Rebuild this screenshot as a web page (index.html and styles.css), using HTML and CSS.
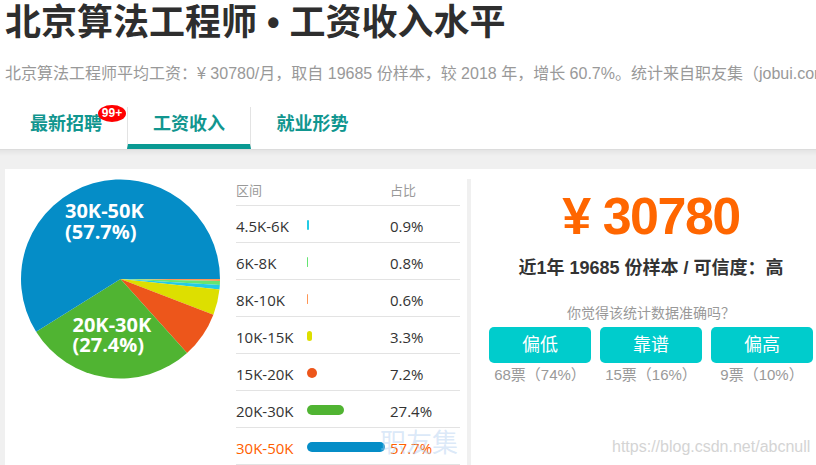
FILE: index.html
```html
<!DOCTYPE html>
<html lang="zh-CN">
<head>
<meta charset="utf-8">
<title>北京算法工程师 • 工资收入水平</title>
<link rel="stylesheet" href="styles.css">
</head>
<body>
<div class="page">
  <header class="head">
    <h1 class="title">北京算法工程师 • 工资收入水平</h1>
    <p class="sub">北京算法工程师平均工资：¥ 30780/月，取自 19685 份样本，较 2018 年，增长 60.7%。统计来自职友集（jobui.com）</p>
    <nav class="tabs">
      <a class="tab t1">最新招聘<span class="badge">99+</span></a>
      <a class="tab t2 active">工资收入</a>
      <a class="tab t3">就业形势</a>
    </nav>
  </header>
  <main class="main">
    <div class="card">
      <section class="left">
        <svg class="pie" width="200" height="200" viewBox="0 0 200 200">
          <path class="s-salmon" d="M100.5 100 L200 100 A99.5 99.5 0 0 1 199.98 102.08 Z"/>
          <path class="s-lgreen" d="M100.5 100 L199.98 102.08 A99.5 99.5 0 0 1 199.81 106.07 Z"/>
          <path class="s-cyan" d="M100.5 100 L199.81 106.07 A99.5 99.5 0 0 1 199.45 110.4 Z"/>
          <path class="s-yellow" d="M100.5 100 L199.45 110.4 A99.5 99.5 0 0 1 193.39 135.66 Z"/>
          <path class="s-orange" d="M100.5 100 L193.39 135.66 A99.5 99.5 0 0 1 167.08 173.94 Z"/>
          <path class="s-green" d="M100.5 100 L167.08 173.94 A99.5 99.5 0 0 1 16.12 152.73 Z"/>
          <path class="s-blue" d="M100.5 100 L16.12 152.73 A99.5 99.5 0 1 1 200 100 Z"/>
          <text class="pl" x="45" y="39">30K-50K</text>
          <text class="pl" x="45" y="60">(57.7%)</text>
          <text class="pl" x="52.5" y="152.5">20K-30K</text>
          <text class="pl" x="52.5" y="172.5">(27.4%)</text>
        </svg>
        <div class="table">
          <div class="row head-row"><span class="c1">区间</span><span class="c2"></span><span class="c3">占比</span></div>
          <div class="row"><span class="c1">4.5K-6K</span><span class="c2"><i class="bar b-cyan" style="width:2px"></i></span><span class="c3">0.9%</span></div>
          <div class="row"><span class="c1">6K-8K</span><span class="c2"><i class="bar b-lgreen" style="width:1px"></i></span><span class="c3">0.8%</span></div>
          <div class="row"><span class="c1">8K-10K</span><span class="c2"><i class="bar b-salmon" style="width:1px"></i></span><span class="c3">0.6%</span></div>
          <div class="row"><span class="c1">10K-15K</span><span class="c2"><i class="bar b-yellow" style="width:4.5px"></i></span><span class="c3">3.3%</span></div>
          <div class="row"><span class="c1">15K-20K</span><span class="c2"><i class="bar b-orange" style="width:10px"></i></span><span class="c3">7.2%</span></div>
          <div class="row"><span class="c1">20K-30K</span><span class="c2"><i class="bar b-green" style="width:37px"></i></span><span class="c3">27.4%</span></div>
          <div class="row hot"><span class="c1">30K-50K</span><span class="c2"><i class="bar b-blue" style="width:78px"></i></span><span class="c3">57.7%</span></div>
        </div>
      </section>
      <div class="divider"></div>
      <section class="right">
        <div class="price">¥ 30780</div>
        <div class="sample">近1年 19685 份样本 / 可信度：高</div>
        <div class="ask">你觉得该统计数据准确吗？</div>
        <div class="votes">
          <div class="vote"><div class="btn">偏低</div><div class="cnt">68票（74%）</div></div>
          <div class="vote"><div class="btn">靠谱</div><div class="cnt">15票（16%）</div></div>
          <div class="vote"><div class="btn">偏高</div><div class="cnt">9票（10%）</div></div>
        </div>
      </section>
      <div class="wm">职友集</div>
    </div>
  </main>
  <div class="csdn">https://blog.csdn.net/abcnull</div>
</div>
</body>
</html>
```

FILE: styles.css
```css
* { box-sizing: border-box; }
html, body { margin: 0; padding: 0; }
body {
  width: 816px;
  height: 465px;
  overflow: hidden;
  background: #fff;
  font-family: "Liberation Sans", "Noto Sans CJK SC", sans-serif;
  color: #333;
}
.page {
  position: relative;
  width: 816px;
  height: 465px;
  overflow: hidden;
}

/* header */
.head {
  padding-left: 5px;
  background: #fff;
  border-bottom: 1px solid #dcdcdc;
}
.title {
  margin: 0;
  font-size: 36px;
  line-height: 46px;
  font-weight: 700;
  color: #2e2e2e;
  white-space: nowrap;
}
.sub {
  margin: 16px 0 0;
  font-size: 16px;
  line-height: 24px;
  color: #999;
  white-space: nowrap;
}
.tabs {
  display: flex;
  margin-top: 21px;
}
.tab {
  position: relative;
  display: block;
  height: 42px;
  padding-bottom: 3px;
  line-height: 34px;
  border-bottom: 5px solid transparent;
  text-align: center;
  font-size: 18px;
  font-weight: 700;
  color: #11968f;
}
.t1 { width: 122px; }
.t2 { width: 124px; border-left: 1px solid #e3e3e3; border-right: 1px solid #e3e3e3; }
.t3 { width: 123px; }
.tab.active { border-bottom-color: #0a9a93; }
.badge {
  position: absolute;
  left: 93px;
  top: -2px;
  width: 28px;
  height: 17px;
  border-radius: 50%;
  background: #f00;
  color: #fff;
  font-family: "Liberation Sans", sans-serif;
  font-size: 12px;
  font-weight: 700;
  line-height: 17px;
  text-align: center;
}

/* main */
.main {
  height: 320px;
  padding: 19px 0 0 5px;
  background: linear-gradient(#e4e4e4, #f0f0f0 6px);
}
.card {
  position: relative;
  display: flex;
  width: 900px;
  height: 300px;
  padding-top: 10px;
  background: #fff;
}
.left {
  display: flex;
  align-items: flex-start;
  width: 462px;
  flex-shrink: 0;
  padding-left: 15px;
}
.pie {
  display: block;
  flex-shrink: 0;
}
.s-salmon { fill: #ff9655; }
.s-lgreen { fill: #64e572; }
.s-cyan { fill: #24cbe5; }
.s-yellow { fill: #dddf00; }
.s-orange { fill: #ed561b; }
.s-green { fill: #50b432; }
.s-blue { fill: #058dc7; }
.pl {
  fill: #fff;
  font-family: "Open Sans", sans-serif;
  font-size: 20px;
  font-weight: 700;
}

.table {
  width: 224px;
  margin-left: 16px;
}
.row {
  display: flex;
  height: 37px;
  border-bottom: 1px solid #e3e3e3;
  font-family: "Open Sans", "Noto Sans CJK SC", sans-serif;
  font-size: 15px;
  color: #333;
}
.c1 { width: 71px; padding-top: 4px; line-height: 32px; }
.c2 { width: 83px; display: flex; align-items: center; padding-top: 2px; }
.c3 { padding-top: 4px; line-height: 32px; }
.head-row {
  height: 27px;
  font-family: "Noto Sans CJK SC", sans-serif;
  font-size: 13px;
  color: #999;
}
.head-row .c1, .head-row .c3 { padding-top: 0; line-height: 22px; }
.bar {
  display: block;
  height: 10px;
  border-radius: 5px;
}
.b-cyan { background: #24cbe5; }
.b-lgreen { background: #64e572; }
.b-salmon { background: #ff9655; }
.b-yellow { background: #dddf00; }
.b-orange { background: #ed561b; }
.b-green { background: #50b432; }
.b-blue { background: #058dc7; }
.hot { color: #ff6000; }

.divider {
  width: 4px;
  flex-shrink: 0;
  background: #f0f0f0;
}

.right {
  width: 360px;
  flex-shrink: 0;
  text-align: center;
}
.price {
  padding-top: 7px;
  font-size: 52px;
  line-height: 60px;
  font-weight: 700;
  letter-spacing: -1.5px;
  color: #ff6600;
}
.sample {
  margin-top: 9px;
  font-size: 18px;
  line-height: 26px;
  font-weight: 700;
  color: #333;
}
.ask {
  margin-top: 22px;
  font-size: 14px;
  line-height: 20px;
  color: #999;
}
.votes {
  display: flex;
  gap: 9px;
  margin-top: 4px;
  padding-left: 18px;
}
.vote { width: 102px; }
.btn {
  height: 36px;
  line-height: 36px;
  border-radius: 5px;
  background: #00cccc;
  color: #fff;
  font-size: 18px;
}
.cnt {
  margin-top: 2px;
  font-size: 15px;
  line-height: 20px;
  color: #999;
}

.wm {
  position: absolute;
  left: 375px;
  top: 259px;
  font-family: "Noto Sans CJK SC", sans-serif;
  font-size: 26px;
  line-height: 26px;
  color: rgba(175, 205, 240, 0.45);
}
.csdn {
  position: absolute;
  left: 612px;
  top: 437px;
  font-family: "Liberation Sans", sans-serif;
  font-size: 16px;
  line-height: 20px;
  color: #d4d4d4;
}
```
